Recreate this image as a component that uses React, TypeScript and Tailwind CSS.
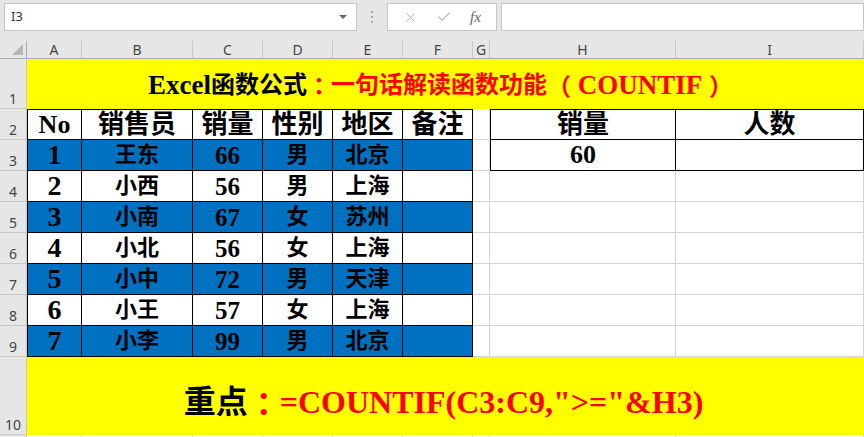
import { X, Check } from "lucide-react";

const serif = "font-['Liberation_Serif','Noto_Sans_CJK_SC',serif] font-bold";
const colon = "font-['Noto_Sans_CJK_TC',sans-serif] font-bold";
const grid = "border-r border-b border-[#d4d4d4] bg-white";
const box = "border-r border-b border-black flex items-center justify-center leading-none";
const head = "bg-[#e6e6e6] text-[#444] text-[14px] font-['Noto_Sans','Liberation_Sans',sans-serif]";

const data: [number, string, number, string, string][] = [
  [1, "王东", 66, "男", "北京"],
  [2, "小西", 56, "男", "上海"],
  [3, "小南", 67, "女", "苏州"],
  [4, "小北", 56, "女", "上海"],
  [5, "小中", 72, "男", "天津"],
  [6, "小王", 57, "女", "上海"],
  [7, "小李", 99, "男", "北京"],
];

function RowHead({ n }: { n: number | string }) {
  return (
    <div className={`${head} border-r border-b border-[#c8c8c8] flex items-end justify-center leading-[18px]`}>
      {n}
    </div>
  );
}

function Toolbar() {
  return (
    <div className="h-[41px] bg-[#e6e6e6] flex items-start pt-[3px] pl-[4px]">
      <div className="w-[353px] h-[28px] bg-white border border-[#c6c6c6] flex items-center justify-between px-[6px] font-['Noto_Sans','Liberation_Sans',sans-serif] text-[13px] text-[#333]">
        <span>I3</span>
        <span className="w-0 h-0 border-l-[4px] border-r-[4px] border-t-[4px] border-l-transparent border-r-transparent border-t-[#666] mr-[3px]" />
      </div>
      <div className="w-[30px] h-[28px] flex flex-col items-center justify-center gap-[3px]">
        <span className="w-[2px] h-[2px] bg-[#a8a8a8]" />
        <span className="w-[2px] h-[2px] bg-[#a8a8a8]" />
        <span className="w-[2px] h-[2px] bg-[#a8a8a8]" />
      </div>
      <div className="w-[110px] h-[28px] bg-white border border-[#c6c6c6] flex items-center justify-around px-[6px]">
        <X size={15} strokeWidth={1.5} className="text-[#b4b4b4]" />
        <Check size={16} strokeWidth={2} className="text-[#c0c0c0]" />
        <span className="font-['Liberation_Serif',serif] italic text-[15px] text-[#666]">fx</span>
      </div>
      <div className="ml-[4px] flex-1 h-[28px] bg-white border border-[#c6c6c6]" />
    </div>
  );
}

export default function App() {
  const cols = ["A", "B", "C", "D", "E", "F", "G", "H", "I"];
  return (
    <div className="w-[864px] h-[437px] overflow-hidden bg-white">
      <Toolbar />
      <div className="grid grid-cols-[27px_55px_111px_70px_70px_70px_70px_17px_186px_188px] grid-rows-[18px_50px_31px_31px_31px_31px_31px_31px_31px_31px_78px_2px]">
        {/* column headers */}
        <div className={`${head} border-r border-b border-[#ababab] relative`}>
          <svg className="absolute right-[3px] bottom-[3px]" width="11" height="11" viewBox="0 0 11 11">
            <polygon points="11,0 11,11 0,11" fill="#b5b5b5" />
          </svg>
        </div>
        {cols.map((c) => (
          <div key={c} className={`${head} border-r border-b border-r-[#c8c8c8] border-b-[#ababab] flex items-center justify-center leading-none`}>
            {c}
          </div>
        ))}

        {/* row 1 title */}
        <RowHead n={1} />
        <div className={`col-span-9 bg-[#ffff00] flex items-center justify-center text-[24px] ${serif} pr-[10px] pt-[2px]`}>
          <span className="text-black text-[27px]">Excel</span>
          <span className="text-black">函数公式</span>
          <span className={`text-[#ff0000] ${colon}`}>：</span>
          <span className="text-[#ff0000]">一句话解读函数功能</span>
          <span className={`text-[#ff0000] ${colon}`}>（</span>
          <span className="text-[#ff0000] text-[27px]">&nbsp;COUNTIF&nbsp;</span>
          <span className={`text-[#ff0000] ${colon}`}>）</span>
        </div>

        {/* row 2 header */}
        <RowHead n={2} />
        {["No", "销售员", "销量", "性别", "地区", "备注"].map((t, i) => (
          <div key={t} className={`${box} border-t bg-white text-[26px] ${serif} ${i === 0 ? "border-l" : ""}`}>
            {t}
          </div>
        ))}
        <div className={`${grid}`} />
        <div className={`${box} border-t border-l bg-white text-[26px] ${serif}`}>销量</div>
        <div className={`${box} border-t bg-white text-[26px] ${serif}`}>人数</div>

        {/* data rows */}
        {data.map(([no, name, sales, sex, area], i) => {
          const fill = i % 2 === 0 ? "bg-[#0070c0]" : "bg-white";
          return [
            <RowHead key={`h${no}`} n={no + 2} />,
            <div key={`a${no}`} className={`${box} border-l ${fill} text-[28px] ${serif}`}>{no}</div>,
            <div key={`b${no}`} className={`${box} ${fill} text-[22px] ${serif}`}>{name}</div>,
            <div key={`c${no}`} className={`${box} ${fill} text-[25px] ${serif}`}>{sales}</div>,
            <div key={`d${no}`} className={`${box} ${fill} text-[22px] ${serif}`}>{sex}</div>,
            <div key={`e${no}`} className={`${box} ${fill} text-[22px] ${serif}`}>{area}</div>,
            <div key={`f${no}`} className={`${box} ${fill}`} />,
            <div key={`g${no}`} className={grid} />,
            i === 0 ? (
              <div key={`h3${no}`} className={`${box} border-l bg-white text-[26px] ${serif}`}>60</div>
            ) : (
              <div key={`hh${no}`} className={grid} />
            ),
            i === 0 ? (
              <div key={`i3${no}`} className={`${box} bg-white`} />
            ) : (
              <div key={`ii${no}`} className={grid} />
            ),
          ];
        })}

        {/* row 10 */}
        <RowHead n={10} />
        <div className={`col-span-9 bg-[#ffff00] flex items-center justify-center pt-[12px] text-[32px] ${serif} pr-[4px]`}>
          <span className="text-black">重点</span>
          <span className={`text-[#ff0000] ${colon}`}>：</span>
          <span className="text-[#ff0000]">=COUNTIF(C3:C9,"&gt;="&amp;H3)</span>
        </div>

        {/* row 11 sliver */}
        <div className={`${head} border-r border-[#c8c8c8]`} />
        {cols.map((c) => (
          <div key={`r11${c}`} className="border-r border-[#d4d4d4] bg-white" />
        ))}
      </div>
    </div>
  );
}
